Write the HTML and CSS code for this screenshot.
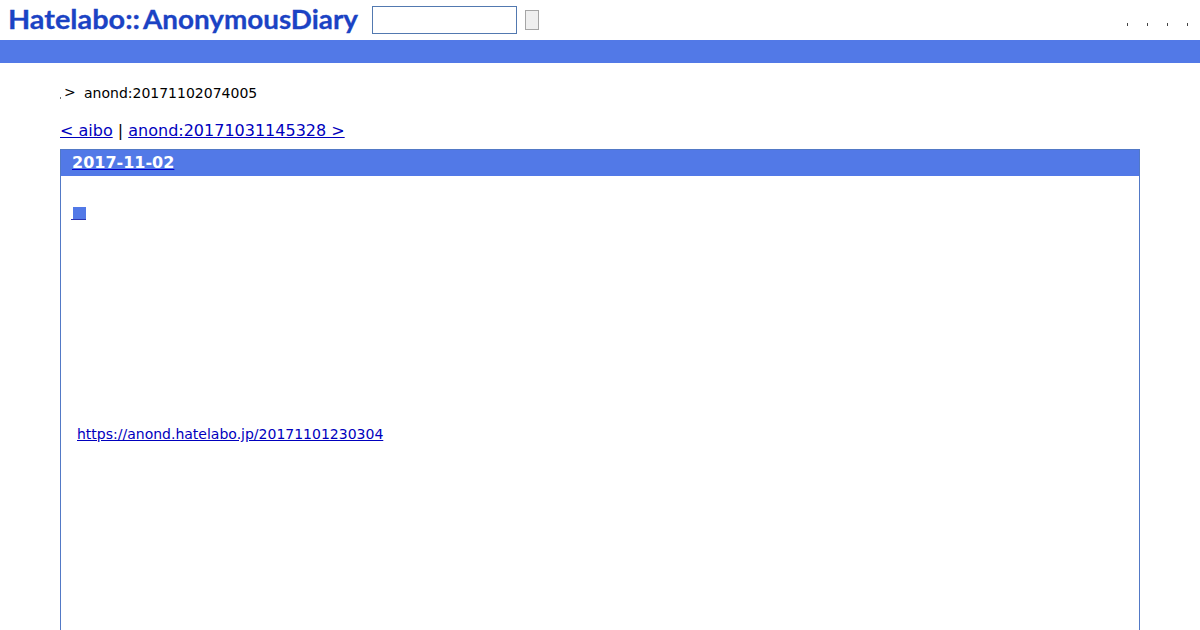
FILE: index.html
```
<!DOCTYPE html>
<html lang="ja">

<head>
    <meta charset="UTF-8">
    <meta name="viewport" content="width=device-width, initial-scale=1.0">
    <title>anond:20171102074005</title>
    <link rel="stylesheet" href="styles.css">
</head>

<body>
    <div class="header">
        <a href="#" class="logo">
            <svg width="350" height="40" viewBox="0 0 350 40">
                <text x="-1" y="29" textLength="132" lengthAdjust="spacingAndGlyphs">Hatelabo::</text>
                <text x="134" y="29" textLength="215" lengthAdjust="spacingAndGlyphs">AnonymousDiary</text>
            </svg>
        </a>
        <form class="search">
            <input type="text" class="word">
            <button type="button" class="submit"></button>
        </form>
        <ul class="menu">
            <li></li>
            <li></li>
            <li></li>
            <li></li>
        </ul>
    </div>
    <div class="bar"></div>

    <div class="container">
        <div class="pan">
            <span class="dot"></span>
            <span class="arrow">&gt;</span>
            <span>anond:20171102074005</span>
        </div>
        <div class="pager"><a href="#">&lt; aibo</a> | <a href="#">anond:20171031145328 &gt;</a></div>
        <div class="day">
            <h2><a href="#">2017-11-02</a></h2>
            <div class="body">
                <h3><a href="#"><span class="sanchor"></span></a></h3>
                <p><a href="#">https://anond.hatelabo.jp/20171101230304</a></p>
            </div>
        </div>
    </div>
</body>

</html>
```

FILE: styles.css
```
* {
    margin: 0;
    padding: 0;
    box-sizing: border-box;
}

body {
    height: 630px;
    overflow: hidden;
    background-color: #fff;
    color: #000;
    font-family: "DejaVu Sans", sans-serif;
    font-size: 16px;
}

a {
    color: #0000bd;
}

.header {
    display: flex;
    align-items: center;
    height: 40px;
    padding: 0 12px 0 9px;
}

.logo {
    display: block;
    height: 40px;
}

.logo text {
    font-family: Lato, sans-serif;
    font-size: 26.5px;
    font-weight: bold;
    fill: #1b43c4;
    stroke: #1b43c4;
    stroke-width: 0.3px;
}

.search {
    display: flex;
    align-items: center;
    margin-left: 13px;
}

.search .word {
    width: 145px;
    height: 28px;
    border: 1px solid #5279b0;
    outline: none;
}

.search .submit {
    width: 14px;
    height: 20px;
    margin-left: 8px;
    border: 1px solid #a5a5a5;
    background-color: #efefef;
}

.menu {
    display: flex;
    gap: 19px;
    margin-left: auto;
    padding-top: 9px;
    list-style: none;
}

.menu li {
    width: 1px;
    height: 3px;
    background-color: #444;
}

.bar {
    height: 23px;
    background-color: #5279e7;
}

.container {
    margin: 0 60px;
}

.pan {
    display: flex;
    height: 20px;
    margin-top: 20px;
    font-size: 14px;
    line-height: 20px;
}

.pan .dot {
    width: 1px;
    height: 2px;
    margin-top: 14px;
    background-color: #777;
}

.pan .arrow {
    width: 20px;
    margin: -1px 0 0 3px;
}

.pager {
    margin-top: 18px;
    line-height: 19px;
}

.day {
    height: 490px;
    margin-top: 9px;
    border: 1px solid #5279c6;
}

.day h2 {
    height: 26px;
    padding-left: 11px;
    background-color: #5279e7;
    font-size: 16px;
    line-height: 25px;
}

.day h2 a {
    color: #fff;
    text-decoration-color: #0000cc;
}

.day .body {
    padding: 31px 10px 0;
}

.day h3 {
    height: 14px;
    line-height: 0;
}

.day h3 a {
    display: inline-block;
    width: 15px;
    height: 13px;
    padding-left: 2px;
    border-bottom: 1px solid #2a35b0;
}

.sanchor {
    display: block;
    height: 12px;
    background-color: #5279e7;
}

.day p {
    margin: 205px 0 0 6px;
    font-size: 14px;
    line-height: 17px;
}
```
